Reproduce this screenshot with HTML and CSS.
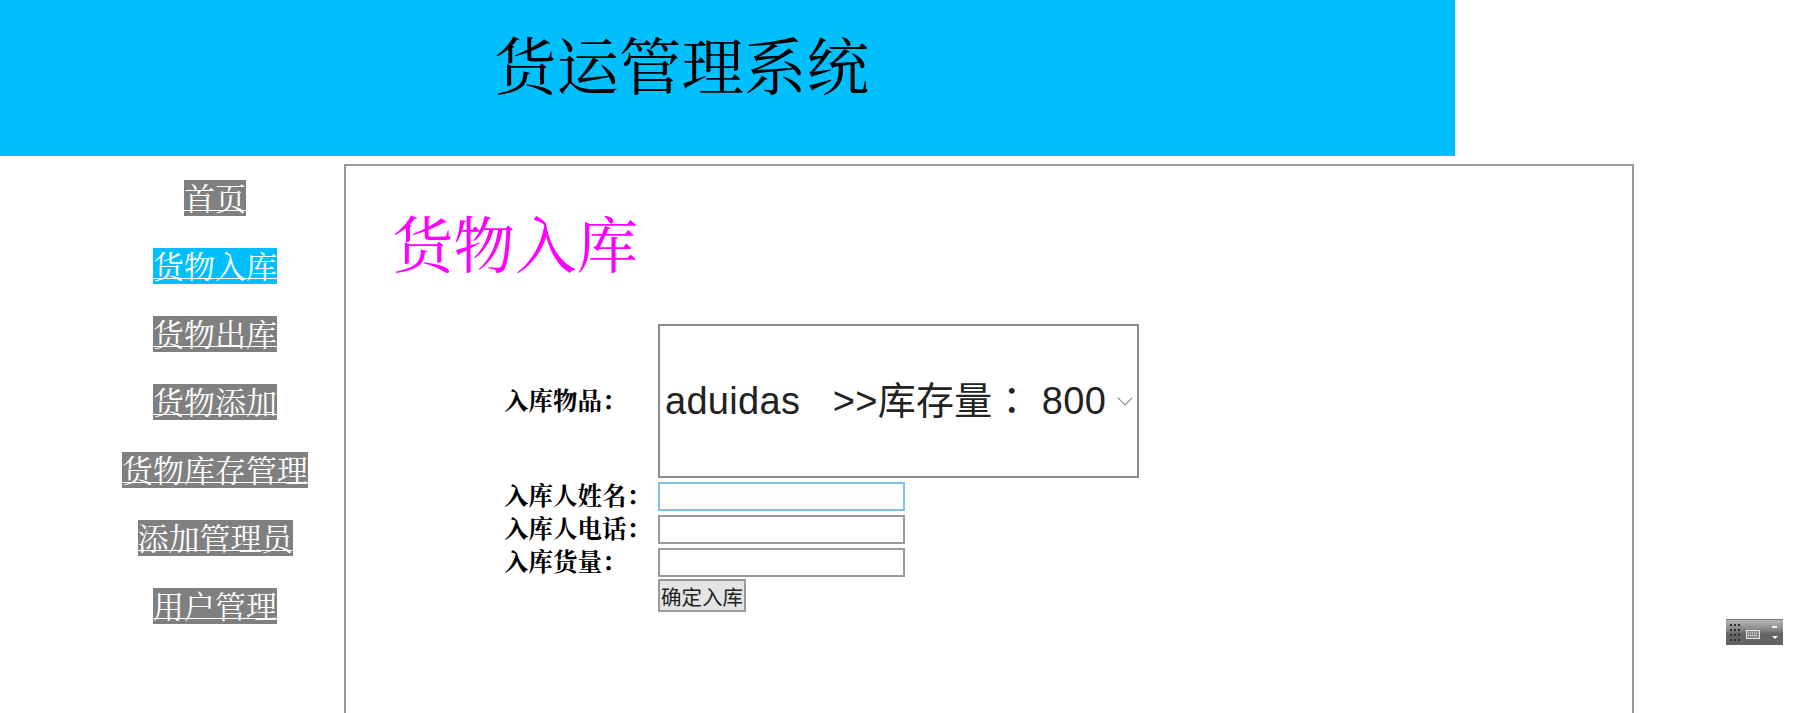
FILE: index.html
```html
<!DOCTYPE html>
<html lang="zh-CN">
<head>
<meta charset="utf-8">
<title>货运管理系统</title>
<link rel="stylesheet" href="styles.css">
</head>
<body>
<header class="site-header">
  <h1 class="site-title">货运管理系统</h1>
</header>
<div class="layout">
  <nav class="side-nav">
    <a class="nav-link" href="#">首页</a>
    <a class="nav-link is-active" href="#">货物入库</a>
    <a class="nav-link" href="#">货物出库</a>
    <a class="nav-link" href="#">货物添加</a>
    <a class="nav-link" href="#">货物库存管理</a>
    <a class="nav-link" href="#">添加管理员</a>
    <a class="nav-link" href="#">用户管理</a>
  </nav>
  <main class="panel">
    <h2 class="panel-title">货物入库</h2>
    <form class="stock-form">
      <label class="field-label" for="goods">入库物品：</label>
      <div class="select-wrap">
        <select class="goods-select" id="goods" lang="zh-TW">
          <option>aduidas&nbsp;&nbsp;&nbsp;&gt;&gt;库存量：&nbsp;800</option>
        </select>
        <svg class="select-arrow" viewBox="0 0 16 9" width="16" height="9" aria-hidden="true"><path d="M.7.7L8 8l7.300-7.300" fill="none" stroke="#8a8a8a" stroke-width="1.100"/></svg>
      </div>
      <label class="field-label" for="name">入库人姓名：</label>
      <input class="text-input is-focused" id="name" type="text">
      <label class="field-label" for="phone">入库人电话：</label>
      <input class="text-input" id="phone" type="text">
      <label class="field-label" for="qty">入库货量：</label>
      <input class="text-input" id="qty" type="text">
      <span></span>
      <button class="submit-btn" type="button">确定入库</button>
    </form>
  </main>
</div>
<svg class="ime-bar" viewBox="0 0 57 26" width="57" height="26" aria-hidden="true">
  <defs>
    <linearGradient id="imeBg" x1="0" y1="0" x2="0" y2="1">
      <stop offset="0" stop-color="#5a5a5a"/>
      <stop offset="0.06" stop-color="#b4b4b4"/>
      <stop offset="0.45" stop-color="#808080"/>
      <stop offset="0.55" stop-color="#666666"/>
      <stop offset="1" stop-color="#626262"/>
    </linearGradient>
  </defs>
  <rect width="57" height="26" fill="url(#imeBg)"/>
  <g fill="#2e2e2e">
    <rect x="4" y="5" width="2" height="2"/><rect x="8" y="5" width="2" height="2"/><rect x="12" y="5" width="2" height="2"/>
    <rect x="4" y="10" width="2" height="2"/><rect x="8" y="10" width="2" height="2"/><rect x="12" y="10" width="2" height="2"/>
    <rect x="4" y="15" width="2" height="2"/><rect x="8" y="15" width="2" height="2"/><rect x="12" y="15" width="2" height="2"/>
    <rect x="4" y="20" width="2" height="2"/><rect x="8" y="20" width="2" height="2"/><rect x="12" y="20" width="2" height="2"/>
  </g>
  <rect x="20.500" y="11.500" width="13" height="8" fill="#8c8c8c" stroke="#e8e8e8"/>
  <path d="M22 14h10M22 16.500h10" stroke="#e8e8e8" stroke-dasharray="1 1"/>
  <rect x="46" y="7" width="5" height="2" fill="#f0f0f0"/>
  <path d="M46 17h6l-3 3z" fill="#ffffff"/>
</svg>
</body>
</html>
```
FILE: styles.css
```css
html, body {
  margin: 0;
  height: 713px;
  overflow: hidden;
  background: #fff;
  font-family: "Noto Serif CJK SC", "Noto Sans CJK SC", "Liberation Serif", serif;
}
.site-header {
  width: 1455px;
  height: 156px;
  background: #00bfff;
  box-sizing: border-box;
  padding: 32px 0 0 494px;
}
.site-title {
  margin: 0;
  font-size: 62.500px;
  line-height: 62px;
  font-weight: 400;
  color: #000;
}
.layout {
  display: flex;
  align-items: flex-start;
  padding-top: 8px;
}
.side-nav {
  box-sizing: border-box;
  width: 344px;
  padding: 16px 0 0 86px;
  display: flex;
  flex-direction: column;
  align-items: center;
  gap: 32px;
}
.nav-link {
  display: block;
  height: 36px;
  line-height: 34px;
  font-size: 31px;
  color: #fff;
  background: #808080;
  text-decoration: underline;
  text-decoration-thickness: 1px;
  text-decoration-skip-ink: none;
  text-underline-offset: 0;
}
.nav-link.is-active {
  background: #00bfff;
}
.panel {
  box-sizing: border-box;
  width: 1290px;
  height: 561px;
  border: 2px solid #9a9a9a;
  padding: 36px 0 0 46px;
}
.panel-title {
  margin: 0;
  font-size: 61.500px;
  line-height: 80px;
  font-weight: 400;
  color: #ff00ff;
}
.stock-form {
  display: grid;
  grid-template-columns: 154px 481px;
  justify-content: start;
  justify-items: start;
  align-items: center;
  row-gap: 4px;
  margin: 42px 0 0 112px;
}
.field-label {
  font-size: 24.500px;
  line-height: 26px;
  padding-bottom: 3px;
  font-weight: 700;
  color: #000;
}
.select-wrap {
  position: relative;
  width: 481px;
  height: 154px;
}
.goods-select {
  appearance: none;
  width: 100%;
  height: 100%;
  box-sizing: border-box;
  border: 2px solid #8c8c8c;
  border-radius: 0;
  background: #fff;
  color: #222;
  padding: 0 0 0 5px;
  font-family: "Liberation Sans", "Noto Sans CJK TC", sans-serif;
  font-size: 38px;
  letter-spacing: 0.3px;
}
.select-arrow {
  position: absolute;
  right: 6px;
  top: 73px;
}
.text-input {
  box-sizing: border-box;
  width: 247px;
  height: 29px;
  border: 2px solid #9a9a9a;
  border-radius: 0;
  padding: 0;
  background: #fff;
  outline: none;
}
.text-input.is-focused {
  border-color: #7cc4e6;
}
.submit-btn {
  box-sizing: border-box;
  width: 88px;
  height: 33px;
  margin-top: -2px;
  padding: 0;
  border: 2px solid #9a9a9a;
  border-radius: 0;
  background: #e4e4e4;
  color: #222;
  font-family: "Noto Sans CJK SC", sans-serif;
  font-size: 20.500px;
  line-height: 28px;
}
.ime-bar {
  position: absolute;
  left: 1726px;
  top: 619px;
}
```
